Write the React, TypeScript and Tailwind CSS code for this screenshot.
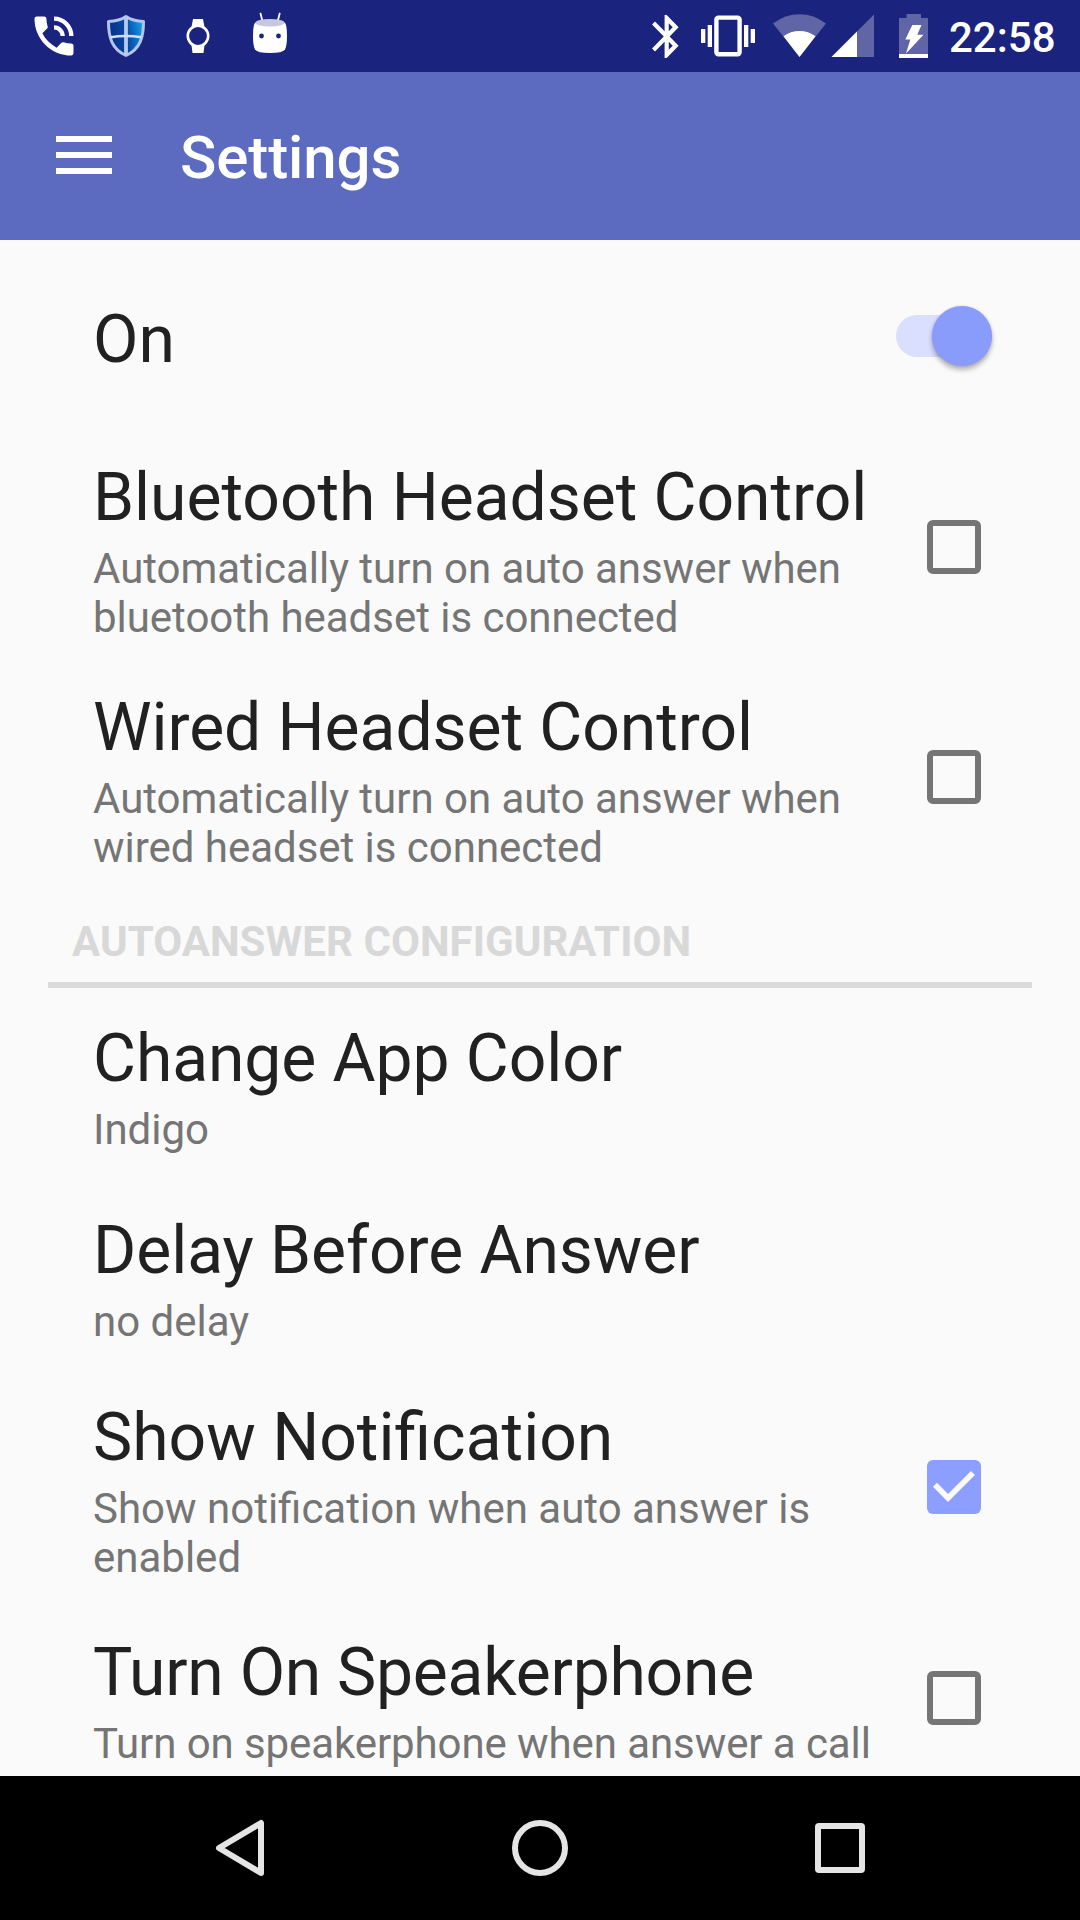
import { useState } from "react";

interface Setting {
  id: string;
  title: string;
  summary?: string;
  control?: "switch" | "checkbox";
  tall?: boolean;
  titleClass?: string;
  summaryClass?: string;
}

const generalSettings: Setting[] = [
  { id: "enabled", title: "On", control: "switch" },
  {
    id: "bluetooth",
    title: "Bluetooth Headset Control",
    summary: "Automatically turn on auto answer when bluetooth headset is connected",
    control: "checkbox",
    tall: true,
    titleClass: "tracking-[-0.04px]",
    summaryClass: "tracking-[-0.03px]",
  },
  {
    id: "wired",
    title: "Wired Headset Control",
    summary: "Automatically turn on auto answer when wired headset is connected",
    control: "checkbox",
    tall: true,
    titleClass: "tracking-[-0.06px]",
    summaryClass: "tracking-[-0.03px]",
  },
];

const configSettings: Setting[] = [
  {
    id: "color",
    title: "Change App Color",
    summary: "Indigo",
    titleClass: "tracking-[-0.08px]",
  },
  {
    id: "delay",
    title: "Delay Before Answer",
    summary: "no delay",
    titleClass: "tracking-[-0.06px]",
  },
  {
    id: "notification",
    title: "Show Notification",
    summary: "Show notification when auto answer is enabled",
    control: "checkbox",
    tall: true,
  },
  {
    id: "speaker",
    title: "Turn On Speakerphone",
    summary: "Turn on speakerphone when answer a call",
    control: "checkbox",
    titleClass: "tracking-[-0.25px]",
    summaryClass: "tracking-[-0.09px]",
  },
];

function PhoneIcon() {
  return (
    <svg width="52" height="52" viewBox="0 0 24 24" fill="#fff">
      <path d="M20 15.5c-1.25 0-2.45-.2-3.57-.57-.35-.11-.74-.03-1.02.24l-2.2 2.2c-2.83-1.44-5.15-3.75-6.59-6.59l2.2-2.21c.28-.26.36-.65.25-1C8.7 6.45 8.5 5.25 8.5 4c0-.55-.45-1-1-1H4c-.55 0-1 .45-1 1 0 9.39 7.61 17 17 17 .55 0 1-.45 1-1v-3.5c0-.55-.45-1-1-1zM19 12h2a9 9 0 0 0-9-9v2c3.87 0 7 3.13 7 7zm-4 0h2c0-2.76-2.24-5-5-5v2c1.66 0 3 1.34 3 3z" />
    </svg>
  );
}

function ShieldIcon() {
  return (
    <svg width="40" height="72" viewBox="106 0 40 72">
      <defs>
        <linearGradient id="shield" x1="0" y1="0.3" x2="1" y2="0.1">
          <stop offset="0" stopColor="#062f8c" />
          <stop offset="0.5" stopColor="#084ca8" />
          <stop offset="1" stopColor="#12a8f4" />
        </linearGradient>
      </defs>
      <path
        d="M126 16.5C121 20 114.500 21.300 108.500 21.500C108.500 37 111.500 49 126 55.500C140.500 49 143.500 37 143.500 21.500C137.500 21.300 131 20 126 16.500Z"
        fill="url(#shield)"
        stroke="#b5c4ea"
        strokeWidth="3"
        strokeLinejoin="round"
      />
      <path d="M126 17v38" stroke="#b5cbee" strokeWidth="3.800" />
      <path d="M110.500 37.300q15.500-2.600 31 0" stroke="#cfe0f8" strokeWidth="2.400" fill="none" />
    </svg>
  );
}

function WatchIcon() {
  return (
    <svg width="24" height="72" viewBox="186 0 24 72" fill="#fff">
      <path d="M193 19h10l1.500 8h-13zM191.500 45h13l-1 8h-11z" />
      <circle cx="198" cy="36" r="10.200" fill="#1a237e" stroke="#fff" strokeWidth="2.600" />
    </svg>
  );
}

function RobotIcon() {
  return (
    <svg width="36" height="72" viewBox="252 0 36 72">
      <path d="M260.500 13.500l2.200 8.500M279.700 13.500l-2.200 8.500" stroke="#fff" strokeWidth="1.800" strokeLinecap="round" />
      <path
        d="M255.500 22.500Q253 23.500 253 36Q253 46 255 49.500Q257.500 53 270 53Q282.500 53 285 49.500Q287 46 287 36Q287 23.500 284.500 22.500Z"
        fill="#fff"
      />
      <ellipse cx="270" cy="22.800" rx="14.500" ry="3.800" fill="#c6c8df" />
      <circle cx="261.500" cy="36" r="2.400" fill="#1a237e" />
      <circle cx="278.500" cy="36" r="2.400" fill="#1a237e" />
    </svg>
  );
}

function BluetoothIcon() {
  return (
    <svg width="28" height="72" viewBox="651 0 28 72" fill="#fff">
      <path
        transform="translate(641.600 10.700) scale(2.090 2.150)"
        d="M17.710 7.710L12 2h-1v7.590L6.410 5 5 6.410 10.590 12 5 17.590 6.410 19 11 14.410V22h1l5.710-5.710-4.300-4.290 4.300-4.290zM13 5.830l1.880 1.880L13 9.590V5.830zm1.880 10.460L13 18.170v-3.760l1.880 1.880z"
      />
    </svg>
  );
}

function VibrateIcon() {
  return (
    <svg width="54" height="72" viewBox="701 0 54 72" fill="#fff">
      <rect x="701" y="29" width="4.300" height="14" />
      <rect x="707.700" y="25" width="4.300" height="22" />
      <rect x="744" y="25" width="4.300" height="22" />
      <rect x="750.700" y="29" width="4.300" height="14" />
      <rect x="716.400" y="17.600" width="23.200" height="36.600" rx="2" fill="none" stroke="#fff" strokeWidth="4.400" />
    </svg>
  );
}

function WifiIcon() {
  return (
    <svg width="54" height="72" viewBox="773 0 54 72" fill="#fff">
      <path d="M799.500 57L773 23.500Q785 14.200 799.500 14.200Q814 14.200 826 23.500Z" fillOpacity="0.300" />
      <path d="M799.500 57L783.500 36.300Q790.500 31 799.500 31Q808.500 31 815.500 36.300Z" />
    </svg>
  );
}

function SignalIcon() {
  return (
    <svg width="43" height="72" viewBox="831 0 43 72" fill="#fff">
      <path d="M874 14.500V57H831.500Z" fillOpacity="0.300" />
      <path d="M857 31.500V57H831.500Z" />
    </svg>
  );
}

function BatteryIcon() {
  return (
    <svg width="29" height="72" viewBox="899 0 29 72" fill="#fff">
      <path d="M906.500 14h14.500v4h7v36h-29V18h7.500z" fillOpacity="0.300" />
      <rect x="899" y="54" width="29" height="4" />
      <path d="M912.300 25H921.500L917.300 34.700H923.500L906 53.500L910.300 39.500H905.300Z" />
    </svg>
  );
}

function StatusBar() {
  return (
    <header className="flex h-[72px] shrink-0 items-center bg-[#1a237e]">
      <div className="ml-[28px] flex items-center">
        <PhoneIcon />
        <span className="w-[26px]" />
        <ShieldIcon />
        <span className="w-[40px]" />
        <WatchIcon />
        <span className="w-[42px]" />
        <RobotIcon />
      </div>
      <div className="ml-auto mr-[25px] flex items-center">
        <BluetoothIcon />
        <span className="w-[22px]" />
        <VibrateIcon />
        <span className="w-[18px]" />
        <WifiIcon />
        <span className="w-[4px]" />
        <SignalIcon />
        <span className="w-[25px]" />
        <BatteryIcon />
        <span className="ml-[21px] w-[106px] pt-[2px] text-[42px] leading-[49px] font-medium whitespace-nowrap text-white">
          22:58
        </span>
      </div>
    </header>
  );
}

function Toolbar() {
  return (
    <div className="flex h-[168px] shrink-0 items-center bg-[#5c6bc0] pl-[56px]">
      <button className="mb-[2px] flex w-[56px] flex-col gap-[10px]" aria-label="Menu">
        <span className="h-[6px] w-full bg-white" />
        <span className="h-[6px] w-full bg-white" />
        <span className="h-[6px] w-full bg-white" />
      </button>
      <h1 className="ml-[68px] pt-[4px] text-[60px] leading-[70px] font-medium tracking-[-0.1px] text-white">
        Settings
      </h1>
    </div>
  );
}

function Switch({ checked, onChange }: { checked: boolean; onChange: () => void }) {
  return (
    <button
      role="switch"
      aria-checked={checked}
      onClick={onChange}
      className={`mr-[88.5px] flex h-[42px] w-[95.5px] items-center rounded-full ${
        checked ? "justify-end bg-[#dadeff]" : "justify-start bg-[#b9b9b9]"
      }`}
    >
      <span
        className={`size-[60px] shrink-0 rounded-full shadow-[0_4px_5px_rgba(0,0,0,0.28),0_0_3px_rgba(0,0,0,0.12)] ${
          checked ? "bg-[#899bfb]" : "bg-[#f1f1f1]"
        }`}
      />
    </button>
  );
}

function Checkbox({ checked, onChange }: { checked: boolean; onChange: () => void }) {
  return (
    <button
      role="checkbox"
      aria-checked={checked}
      onClick={onChange}
      className={`mr-[99px] size-[54px] rounded-[6px] ${
        checked ? "bg-[#8c9eff]" : "border-[6px] border-[#757575]"
      }`}
    >
      {checked && (
        <svg width="54" height="54" viewBox="0 0 54 54" fill="none">
          <path d="M8 24.800L21 38L46 13" stroke="#fafafa" strokeWidth="5.600" />
        </svg>
      )}
    </button>
  );
}

export default function App() {
  const [values, setValues] = useState<Record<string, boolean>>({
    enabled: true,
    notification: true,
  });

  const toggle = (id: string) => setValues((prev) => ({ ...prev, [id]: !prev[id] }));

  const renderSetting = (item: Setting) => (
    <li
      key={item.id}
      className={`flex shrink-0 items-center justify-between pl-[93px] ${item.tall ? "h-[230px]" : "h-[192px]"}`}
    >
      <div className={`w-[786px] ${item.summary && !item.tall ? "pt-[6px]" : "pt-[7px]"}`}>
        <h2
          className={`text-[66px] leading-[77px] whitespace-nowrap text-[#212121] ${item.titleClass ?? ""}`}
        >
          {item.title}
        </h2>
        {item.summary && (
          <p className={`mt-2 text-[42px] leading-[49px] text-[#757575] ${item.summaryClass ?? ""}`}>
            {item.summary}
          </p>
        )}
      </div>
      {item.control === "switch" && (
        <Switch checked={!!values[item.id]} onChange={() => toggle(item.id)} />
      )}
      {item.control === "checkbox" && (
        <Checkbox checked={!!values[item.id]} onChange={() => toggle(item.id)} />
      )}
    </li>
  );

  return (
    <div className="flex h-[1920px] w-[1080px] flex-col overflow-hidden bg-[#fafafa] font-['Roboto',sans-serif]">
      <StatusBar />
      <Toolbar />
      <main className="flex-1 overflow-hidden">
        <ul className="flex flex-col">{generalSettings.map(renderSetting)}</ul>
        <h3 className="mx-[48px] h-[96px] border-b-[6px] border-[#dbdbdb] pt-[25px] pl-[24px] text-[42px] leading-[49px] font-bold tracking-[0.04px] text-[#d8d8d8]">
          AUTOANSWER CONFIGURATION
        </h3>
        <ul className="flex flex-col">{configSettings.map(renderSetting)}</ul>
      </main>
      <nav className="flex h-[144px] shrink-0 items-center justify-between bg-black pr-[215px] pl-[215px]">
        <svg width="50" height="60" viewBox="0 0 50 60" fill="none">
          <path d="M4 30L46 5V55Z" stroke="#e5e5e5" strokeWidth="6" strokeLinejoin="round" />
        </svg>
        <svg width="60" height="60" viewBox="0 0 60 60" fill="none">
          <circle cx="30" cy="30" r="25" stroke="#e5e5e5" strokeWidth="6" />
        </svg>
        <svg width="50" height="50" viewBox="0 0 50 50" fill="none">
          <rect x="3" y="3" width="44" height="44" rx="1" stroke="#e5e5e5" strokeWidth="6" strokeLinejoin="round" />
        </svg>
      </nav>
    </div>
  );
}
